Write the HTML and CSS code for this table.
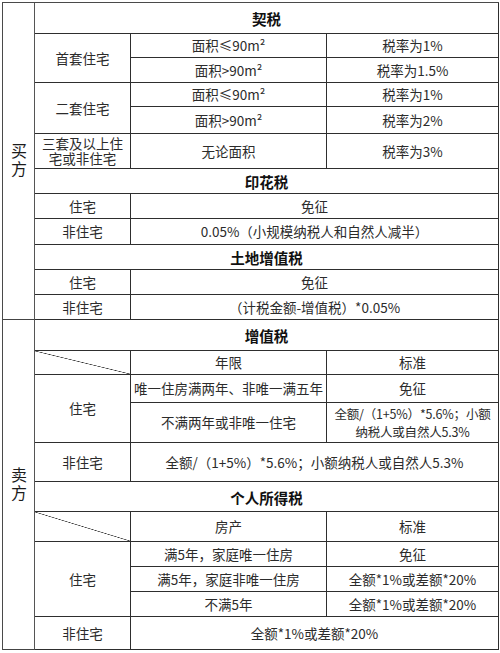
FILE: index.html
```html
<!DOCTYPE html>
<html lang="zh-CN">
<head>
<meta charset="utf-8">
<title>房产交易税费表</title>
<link rel="stylesheet" href="styles.css">
</head>
<body>
<div class="tax">
  <div class="c side rs12">买方</div>
  <div class="c hd span3">契税</div>

  <div class="c rs2">首套住宅</div>
  <div class="c">面积≤90m²</div>
  <div class="c">税率为1%</div>
  <div class="c">面积&gt;90m²</div>
  <div class="c">税率为1.5%</div>

  <div class="c rs2">二套住宅</div>
  <div class="c">面积≤90m²</div>
  <div class="c">税率为1%</div>
  <div class="c">面积&gt;90m²</div>
  <div class="c">税率为2%</div>

  <div class="c tight">三套及以上住宅或非住宅</div>
  <div class="c">无论面积</div>
  <div class="c">税率为3%</div>

  <div class="c hd span3">印花税</div>
  <div class="c">住宅</div>
  <div class="c span2">免征</div>
  <div class="c">非住宅</div>
  <div class="c span2">0.05%（小规模纳税人和自然人减半）</div>

  <div class="c hd span3">土地增值税</div>
  <div class="c">住宅</div>
  <div class="c span2">免征</div>
  <div class="c">非住宅</div>
  <div class="c span2">（计税金额-增值税）*0.05%</div>

  <div class="c side rs11">卖方</div>
  <div class="c hd span3">增值税</div>
  <div class="c diag"></div>
  <div class="c">年限</div>
  <div class="c">标准</div>
  <div class="c rs2">住宅</div>
  <div class="c nowrap">唯一住房满两年、非唯一满五年</div>
  <div class="c">免征</div>
  <div class="c">不满两年或非唯一住宅</div>
  <div class="c two"><span class="ln">全额/（1+5%）*5.6%；小额</span><span class="ln">纳税人或自然人5.3%</span></div>
  <div class="c">非住宅</div>
  <div class="c span2">全额/（1+5%）*5.6%；小额纳税人或自然人5.3%</div>

  <div class="c hd span3">个人所得税</div>
  <div class="c diag"></div>
  <div class="c">房产</div>
  <div class="c">标准</div>
  <div class="c rs3">住宅</div>
  <div class="c">满5年，家庭唯一住房</div>
  <div class="c">免征</div>
  <div class="c">满5年，家庭非唯一住房</div>
  <div class="c">全额*1%或差额*20%</div>
  <div class="c">不满5年</div>
  <div class="c">全额*1%或差额*20%</div>
  <div class="c">非住宅</div>
  <div class="c span2">全额*1%或差额*20%</div>
</div>
</body>
</html>
```

FILE: styles.css
```css
html, body {
  margin: 0;
  padding: 0;
  background: #fff;
}

body {
  font-family: "Noto Sans CJK SC", "Noto Sans", sans-serif;
  color: #2b2b2b;
}

.tax {
  margin: 2px 0 0 2px;
  width: 497px;
  box-sizing: border-box;
  display: grid;
  grid-template-columns: 32px 96px 196px 172px;
  grid-template-rows: 31px 24px 25px 24px 27px 35px 25px 25px 26px 25px 25px 25px 31px 24px 28px 40px 39px 30px 30px 25px 25px 25px 33px;
  border-top: 1px solid #4a4a4a;
  border-left: 1px solid #4a4a4a;
}

.c {
  box-sizing: border-box;
  border-right: 1px solid #2e2e2e;
  border-bottom: 1px solid #2e2e2e;
  display: flex;
  align-items: center;
  justify-content: center;
  text-align: center;
  font-size: 13.5px;
  line-height: 1.2;
  padding: 0 2px;
  overflow: hidden;
}

.span2 { grid-column: span 2; }
.span3 { grid-column: span 3; }
.rs2 { grid-row: span 2; }
.rs3 { grid-row: span 3; }
.rs11 { grid-row: span 11; }
.rs12 { grid-row: span 12; }

.hd {
  font-weight: 700;
  font-size: 14.5px;
  color: #111;
  padding-top: 2px;
}

.side {
  writing-mode: vertical-rl;
  font-size: 16px;
  letter-spacing: 2px;
  color: #1c1c1c;
  border-right: 1px solid #555;
  border-bottom: 1px solid #444;
  padding: 0;
}

.tight {
  line-height: 15px;
  padding: 0 4px;
}

.nowrap {
  white-space: nowrap;
  padding: 0;
}

.two {
  flex-direction: column;
  font-size: 12.5px;
  letter-spacing: -0.2px;
  line-height: 18px;
  padding: 0;
  white-space: nowrap;
}

.ln {
  display: block;
}

.diag {
  background: linear-gradient(to top right, transparent calc(50% - 0.6px), #333 50%, transparent calc(50% + 0.6px));
}
```
